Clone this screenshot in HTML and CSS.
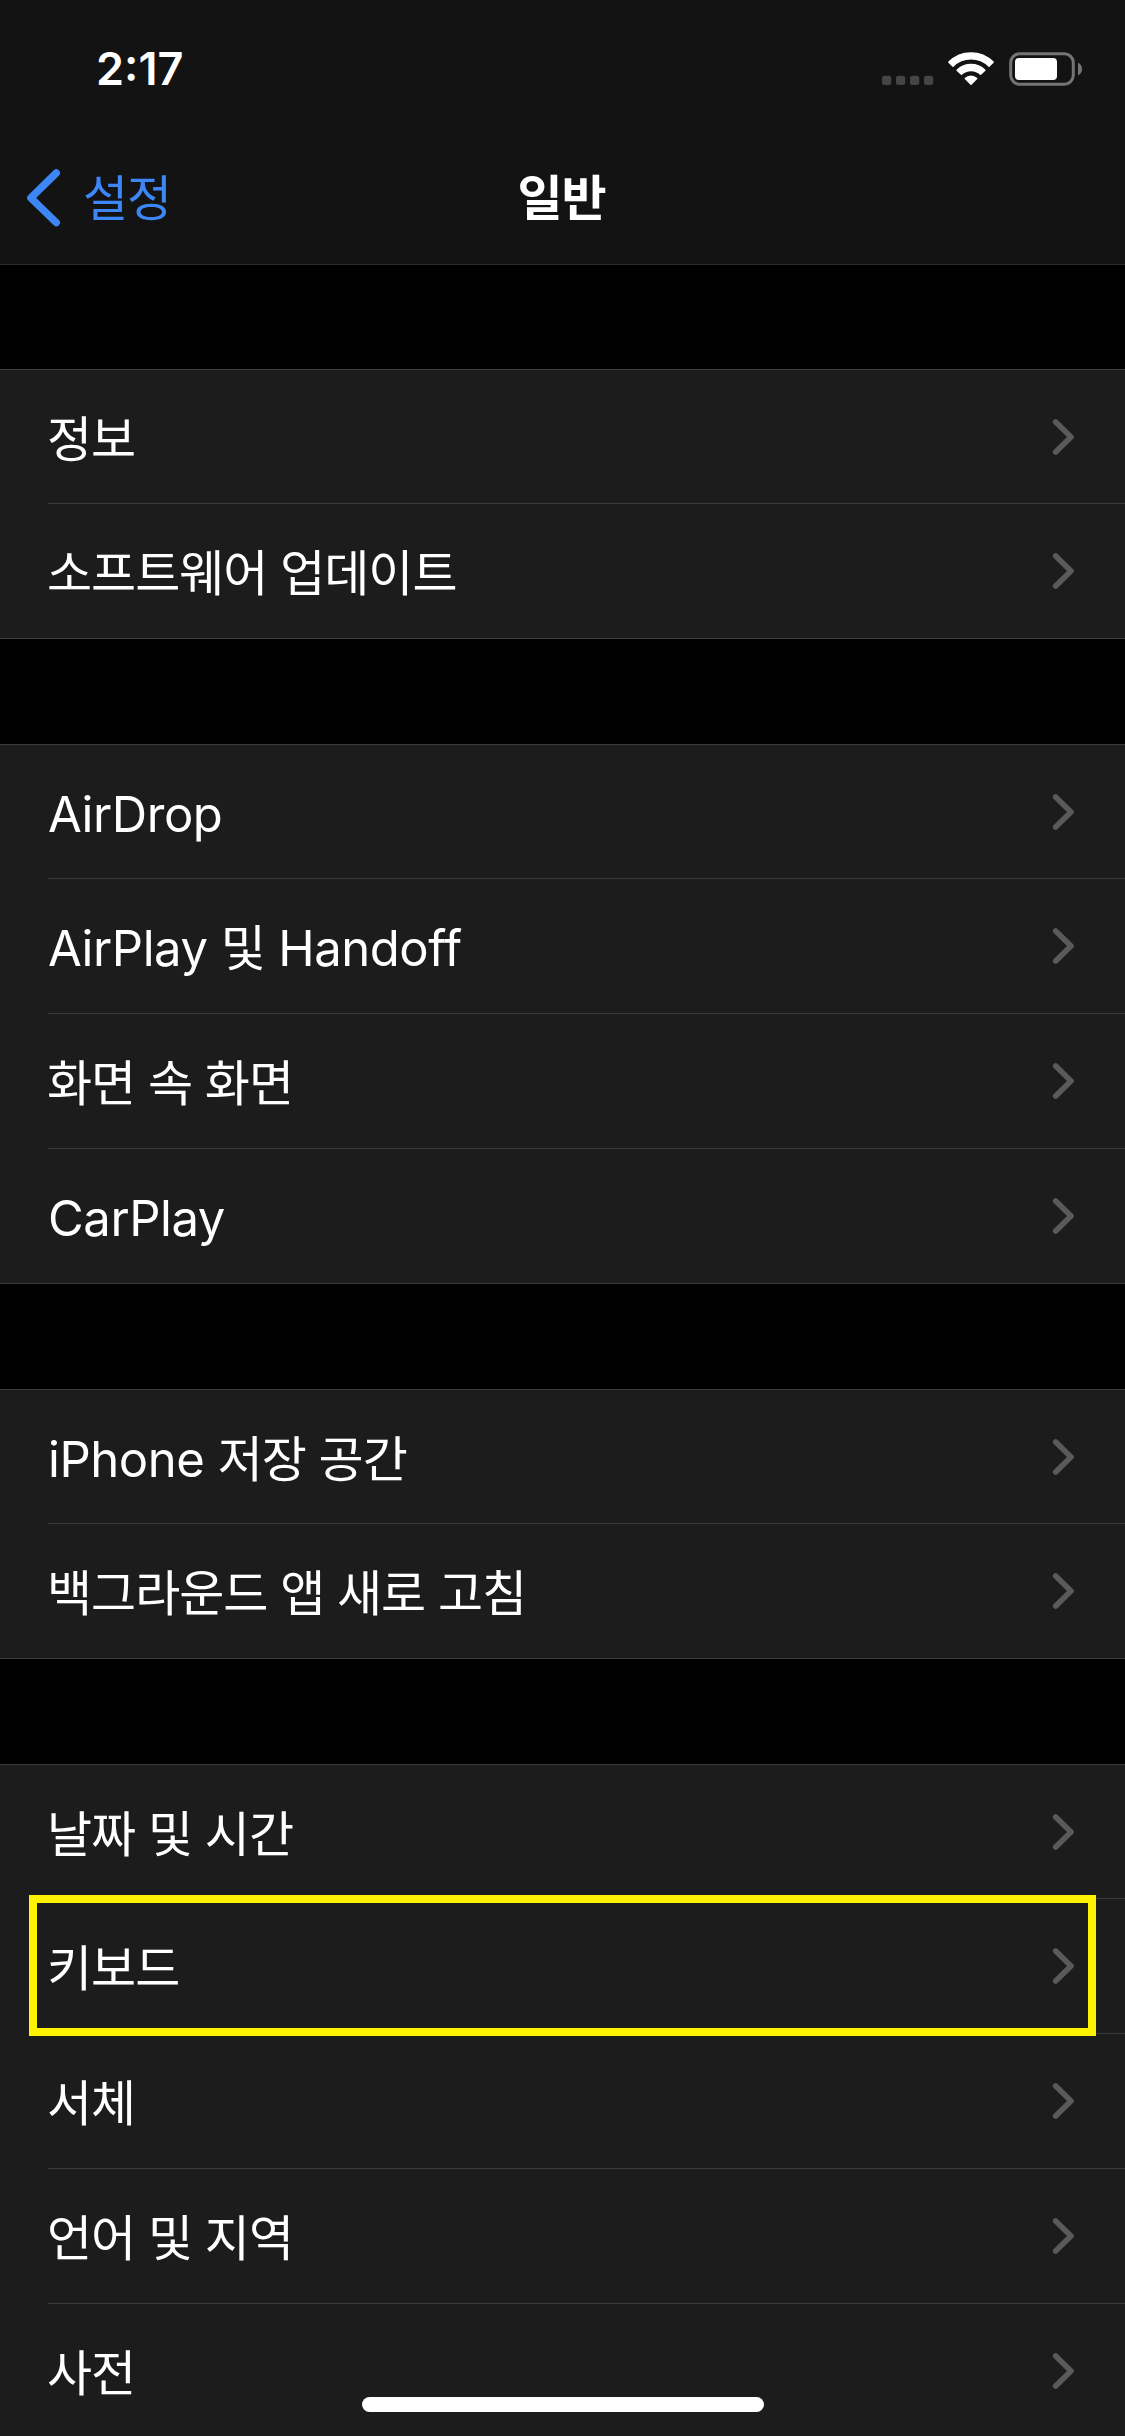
FILE: index.html
```html
<!DOCTYPE html>
<html lang="ko">
<head>
<meta charset="utf-8">
<title>일반</title>
<link rel="stylesheet" href="styles.css">
</head>
<body>
<svg class="defs" width="0" height="0" aria-hidden="true">
  <symbol id="chevron" viewBox="0 0 24 38"><path d="M4.7 4 20 19 4.7 34" fill="none" stroke="currentColor" stroke-width="5.6" stroke-linecap="round" stroke-linejoin="round"/></symbol>
</svg>
<div class="screen">
  <header class="header">
    <div class="status">
      <div class="time">2:17</div>
      <svg class="status-icons" width="204" height="40" viewBox="0 0 204 40">
        <g fill="#454547">
          <rect x="2" y="25.7" width="9.2" height="9.3" rx="2.5"/>
          <rect x="16" y="25.7" width="9.2" height="9.3" rx="2.5"/>
          <rect x="30" y="25.7" width="9.2" height="9.3" rx="2.5"/>
          <rect x="44" y="25.7" width="9.2" height="9.3" rx="2.5"/>
        </g>
        <g fill="#fff" stroke="#fff" stroke-width="1.5" stroke-linejoin="round">
          <path d="M68.9 12.1A31.2 31.2 0 0 1 113.1 12.1L109 16.1A25.6 25.6 0 0 0 73 16.1Z"/>
          <path d="M77.1 20.2A19.8 19.8 0 0 1 104.9 20.2L100.6 24.3A13.8 13.8 0 0 0 81.4 24.3Z"/>
          <path d="M85.3 28.5A8.2 8.2 0 0 1 96.7 28.5L91 34.2Z"/>
        </g>
        <rect x="130.7" y="3.7" width="62.6" height="30.6" rx="9" fill="none" stroke="#747474" stroke-width="3"/>
        <rect x="135" y="8" width="42" height="22" rx="4" fill="#fff"/>
        <path d="M198 12.7C200.7 13.8 202 16.2 202 19S200.7 24.2 198 25.3Z" fill="#747474"/>
      </svg>
    </div>
    <nav class="nav">
      <a class="back">
        <svg width="36" height="60" viewBox="0 0 36 60"><path d="M30.3 5 4.8 29.8 30.3 54.600" fill="none" stroke="currentColor" stroke-width="7.4" stroke-linecap="round" stroke-linejoin="round"/></svg>
        <span class="back-label">설정</span>
      </a>
      <h1 class="title">일반</h1>
    </nav>
  </header>
  <main class="groups">
    <section class="group">
      <div class="row"><span class="label ko">정보</span><svg class="chev"><use href="#chevron"/></svg></div>
      <div class="row"><span class="label ko">소프트웨어 업데이트</span><svg class="chev"><use href="#chevron"/></svg></div>
    </section>
    <section class="group">
      <div class="row"><span class="label">AirDrop</span><svg class="chev"><use href="#chevron"/></svg></div>
      <div class="row"><span class="label">AirPlay <span class="ko">및</span> Handoff</span><svg class="chev"><use href="#chevron"/></svg></div>
      <div class="row"><span class="label ko">화면 속 화면</span><svg class="chev"><use href="#chevron"/></svg></div>
      <div class="row"><span class="label">CarPlay</span><svg class="chev"><use href="#chevron"/></svg></div>
    </section>
    <section class="group">
      <div class="row"><span class="label">iPhone <span class="ko">저장 공간</span></span><svg class="chev"><use href="#chevron"/></svg></div>
      <div class="row"><span class="label ko">백그라운드 앱 새로 고침</span><svg class="chev"><use href="#chevron"/></svg></div>
    </section>
    <section class="group">
      <div class="row"><span class="label ko">날짜 및 시간</span><svg class="chev"><use href="#chevron"/></svg></div>
      <div class="row highlighted"><span class="label ko">키보드</span><svg class="chev"><use href="#chevron"/></svg></div>
      <div class="row"><span class="label ko">서체</span><svg class="chev"><use href="#chevron"/></svg></div>
      <div class="row"><span class="label ko">언어 및 지역</span><svg class="chev"><use href="#chevron"/></svg></div>
      <div class="row"><span class="label ko">사전</span><svg class="chev"><use href="#chevron"/></svg></div>
    </section>
  </main>
  <div class="home-indicator"></div>
</div>
</body>
</html>
```

FILE: styles.css
```css
*,
*::after { box-sizing: border-box; }

body {
  margin: 0;
  background: #000;
  color: #fff;
  font-family: Inter, "Noto Sans CJK KR", sans-serif;
}

.defs { position: absolute; }

.screen {
  position: relative;
  width: 1125px;
  height: 2436px;
  overflow: hidden;
}

.header {
  height: 265px;
  background: #131313;
  border-bottom: 1px solid #2b2b2b;
}

.status {
  display: flex;
  justify-content: space-between;
  height: 132px;
  padding: 50px 41px 0 96px;
}

.time {
  font-size: 45px;
  line-height: 38px;
  font-weight: 600;
}

.nav {
  display: grid;
  grid-template-columns: 1fr auto 1fr;
  align-items: center;
  height: 132px;
}

.back {
  display: flex;
  align-items: center;
  gap: 21px;
  padding-left: 26px;
  color: #3d86f6;
}

.back-label {
  padding-top: 1px;
  font-size: 49px;
  line-height: 60px;
  letter-spacing: -1.1px;
}

.title {
  margin: 0 2px 0 0;
  padding-top: 2px;
  font-size: 49px;
  line-height: 60px;
  font-weight: 600;
  letter-spacing: -1.1px;
}

.groups {
  display: flex;
  flex-direction: column;
  gap: 105px;
  padding-top: 104px;
}

.group {
  background: #1c1c1c;
  border-top: 1px solid #3b3b3c;
  border-bottom: 1px solid #3b3b3c;
}

.row {
  position: relative;
  display: flex;
  align-items: center;
  justify-content: space-between;
  height: 135px;
  margin-left: 48px;
  padding-right: 50px;
  border-bottom: 1px solid #3b3b3c;
}

.row:first-child { height: 134px; }

.row:last-child {
  height: 134px;
  border-bottom: 0;
}

.label {
  padding-top: 6px;
  font-size: 49px;
  line-height: 60px;
  letter-spacing: -0.45px;
  white-space: nowrap;
}

.ko,
.label.ko { letter-spacing: -1px; }

.label.ko { margin-left: -1px; }

.chev {
  flex: none;
  width: 24px;
  height: 38px;
  color: #5a5a5d;
}

/* Frame that reaches past the row on both sides */
.highlighted::after {
  content: "";
  position: absolute;
  top: -4px;
  right: 29px;
  left: -19px;
  height: 141px;
  border: 8px solid #fff200;
}

.home-indicator {
  position: absolute;
  bottom: 24px;
  left: 362px;
  width: 402px;
  height: 15px;
  border-radius: 8px;
  background: #fff;
}
```
